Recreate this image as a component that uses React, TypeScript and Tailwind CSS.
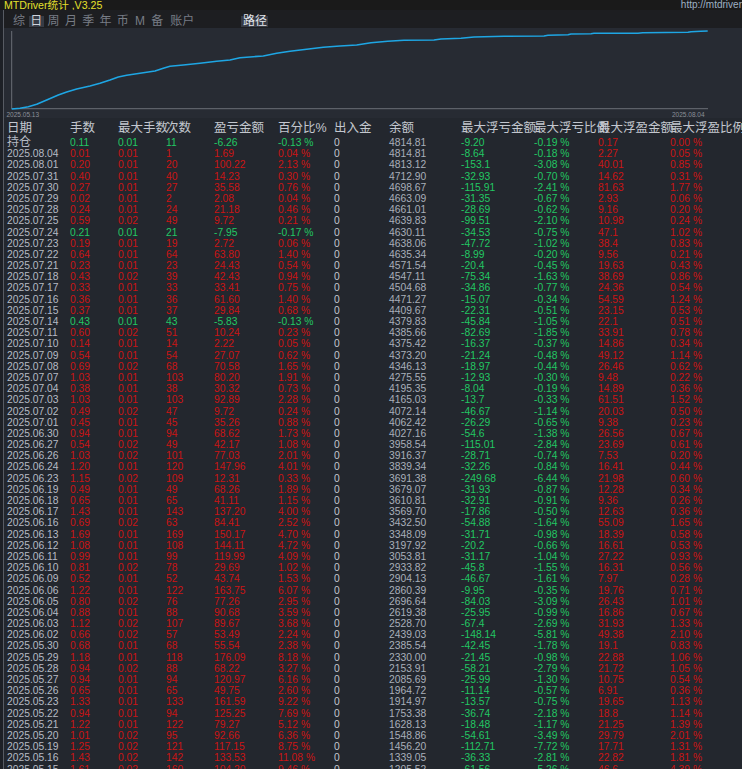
import React from "react";

// date|lots|maxLots|count|pl|pct|balance|maxLoss|maxLossPct|maxGain|maxGainPct
const rows = [
  "持仓|0.11|0.01|11|-6.26|-0.13|4814.81|-9.20|-0.19|0.17|0.00",
  "2025.08.04|0.01|0.01|1|1.69|0.04|4814.81|-8.64|-0.18|2.27|0.05",
  "2025.08.01|0.20|0.01|20|100.22|2.13|4813.12|-153.1|-3.08|40.01|0.85",
  "2025.07.31|0.40|0.01|40|14.23|0.30|4712.90|-32.93|-0.70|14.62|0.31",
  "2025.07.30|0.27|0.01|27|35.58|0.76|4698.67|-115.91|-2.41|81.63|1.77",
  "2025.07.29|0.02|0.01|2|2.08|0.04|4663.09|-31.35|-0.67|2.93|0.06",
  "2025.07.28|0.24|0.01|24|21.18|0.46|4661.01|-28.69|-0.62|9.16|0.20",
  "2025.07.25|0.59|0.02|49|9.72|0.21|4639.83|-99.51|-2.10|10.98|0.24",
  "2025.07.24|0.21|0.01|21|-7.95|-0.17|4630.11|-34.53|-0.75|47.1|1.02",
  "2025.07.23|0.19|0.01|19|2.72|0.06|4638.06|-47.72|-1.02|38.4|0.83",
  "2025.07.22|0.64|0.01|64|63.80|1.40|4635.34|-8.99|-0.20|9.56|0.21",
  "2025.07.21|0.23|0.01|23|24.43|0.54|4571.54|-20.4|-0.45|19.63|0.43",
  "2025.07.18|0.43|0.02|39|42.43|0.94|4547.11|-75.34|-1.63|38.69|0.86",
  "2025.07.17|0.33|0.01|33|33.41|0.75|4504.68|-34.86|-0.77|24.36|0.54",
  "2025.07.16|0.36|0.01|36|61.60|1.40|4471.27|-15.07|-0.34|54.59|1.24",
  "2025.07.15|0.37|0.01|37|29.84|0.68|4409.67|-22.31|-0.51|23.15|0.53",
  "2025.07.14|0.43|0.01|43|-5.83|-0.13|4379.83|-45.84|-1.05|22.1|0.51",
  "2025.07.11|0.60|0.02|51|10.24|0.23|4385.66|-82.69|-1.85|33.91|0.78",
  "2025.07.10|0.14|0.01|14|2.22|0.05|4375.42|-16.37|-0.37|14.86|0.34",
  "2025.07.09|0.54|0.01|54|27.07|0.62|4373.20|-21.24|-0.48|49.12|1.14",
  "2025.07.08|0.69|0.02|68|70.58|1.65|4346.13|-18.97|-0.44|26.46|0.62",
  "2025.07.07|1.03|0.01|103|80.20|1.91|4275.55|-12.93|-0.30|9.48|0.22",
  "2025.07.04|0.38|0.01|38|30.32|0.73|4195.35|-8.04|-0.19|14.89|0.36",
  "2025.07.03|1.03|0.01|103|92.89|2.28|4165.03|-13.7|-0.33|61.51|1.52",
  "2025.07.02|0.49|0.02|47|9.72|0.24|4072.14|-46.67|-1.14|20.03|0.50",
  "2025.07.01|0.45|0.01|45|35.26|0.88|4062.42|-26.29|-0.65|9.38|0.23",
  "2025.06.30|0.94|0.01|94|68.62|1.73|4027.16|-54.6|-1.38|26.56|0.67",
  "2025.06.27|0.54|0.02|49|42.17|1.08|3958.54|-115.01|-2.84|23.69|0.61",
  "2025.06.26|1.03|0.02|101|77.03|2.01|3916.37|-28.71|-0.74|7.53|0.20",
  "2025.06.24|1.20|0.01|120|147.96|4.01|3839.34|-32.26|-0.84|16.41|0.44",
  "2025.06.23|1.15|0.02|109|12.31|0.33|3691.38|-249.68|-6.44|21.98|0.60",
  "2025.06.19|0.49|0.01|49|68.26|1.89|3679.07|-31.93|-0.87|12.28|0.34",
  "2025.06.18|0.65|0.01|65|41.11|1.15|3610.81|-32.91|-0.91|9.36|0.26",
  "2025.06.17|1.43|0.01|143|137.20|4.00|3569.70|-17.86|-0.50|12.63|0.36",
  "2025.06.16|0.69|0.02|63|84.41|2.52|3432.50|-54.88|-1.64|55.09|1.65",
  "2025.06.13|1.69|0.01|169|150.17|4.70|3348.09|-31.71|-0.98|18.39|0.58",
  "2025.06.12|1.08|0.01|108|144.11|4.72|3197.92|-20.2|-0.66|16.61|0.53",
  "2025.06.11|0.99|0.01|99|119.99|4.09|3053.81|-31.17|-1.04|27.22|0.93",
  "2025.06.10|0.81|0.02|78|29.69|1.02|2933.82|-45.8|-1.55|16.31|0.56",
  "2025.06.09|0.52|0.01|52|43.74|1.53|2904.13|-46.67|-1.61|7.97|0.28",
  "2025.06.06|1.22|0.01|122|163.75|6.07|2860.39|-9.95|-0.35|19.76|0.71",
  "2025.06.05|0.80|0.02|76|77.26|2.95|2696.64|-84.03|-3.09|26.43|1.01",
  "2025.06.04|0.88|0.01|88|90.68|3.59|2619.38|-25.95|-0.99|16.86|0.67",
  "2025.06.03|1.12|0.02|107|89.67|3.68|2528.70|-67.4|-2.69|31.93|1.33",
  "2025.06.02|0.66|0.02|57|53.49|2.24|2439.03|-148.14|-5.81|49.38|2.10",
  "2025.05.30|0.68|0.01|68|55.54|2.38|2385.54|-42.45|-1.78|19.1|0.83",
  "2025.05.29|1.18|0.01|118|176.09|8.18|2330.00|-21.45|-0.98|22.88|1.06",
  "2025.05.28|0.94|0.02|88|68.22|3.27|2153.91|-58.21|-2.79|21.72|1.05",
  "2025.05.27|0.94|0.01|94|120.97|6.16|2085.69|-25.99|-1.30|10.75|0.54",
  "2025.05.26|0.65|0.01|65|49.75|2.60|1964.72|-11.14|-0.57|6.91|0.36",
  "2025.05.23|1.33|0.01|133|161.59|9.22|1914.97|-13.57|-0.75|19.65|1.13",
  "2025.05.22|0.94|0.01|94|125.25|7.69|1753.38|-36.74|-2.18|18.8|1.14",
  "2025.05.21|1.22|0.01|122|79.27|5.12|1628.13|-18.48|-1.17|21.25|1.39",
  "2025.05.20|1.01|0.02|95|92.66|6.36|1548.86|-54.61|-3.49|29.79|2.01",
  "2025.05.19|1.25|0.02|121|117.15|8.75|1456.20|-112.71|-7.72|17.71|1.31",
  "2025.05.16|1.43|0.02|142|133.53|11.08|1339.05|-36.33|-2.81|22.82|1.81",
  "2025.05.15|1.61|0.02|160|104.20|9.46|1205.52|-61.56|-5.26|46.6|4.39",
].map((r) => r.split("|"));

const tabs = ["综", "日", "周", "月", "季", "年", "币", "M", "备"];

const curve = [
  [11.7, 109], [20, 108.3], [28.3, 106.7], [36.7, 104.3], [46.7, 100], [58.3, 95],
  [66.7, 92], [76.7, 89], [90, 86], [100, 83.3], [110, 80], [118.3, 77],
  [126.7, 75.3], [140, 73.3], [155, 71], [163.3, 68.3], [170, 66.3], [183.3, 65],
  [200, 63.3], [216.7, 61.3], [230, 60], [240, 57.7], [253.3, 56.7], [263.3, 56],
  [276.7, 53.3], [290, 51.3], [306.7, 49.3], [323.3, 47.3], [340, 46], [356.7, 45],
  [371, 42.7], [387.7, 41.3], [404, 40.3], [434, 40], [441, 39], [461, 38.3],
  [474, 37], [504, 36.3], [544, 36], [548, 35.3], [568, 34.7], [571, 34],
  [591, 33.7], [594, 33.3], [638, 33.3], [642.7, 32.7], [688, 32.3], [691, 31.7],
  [701, 31.3], [707.7, 31],
]
  .map(([x, y]) => `${x},${y}`)
  .join(" ");

const red = "text-[#cc1414]";
const green = "text-[#22c863]";

const Chart = () => (
  <div className="h-[90px] shrink-0 bg-[#272b33]">
    <svg width="738" height="90" viewBox="4 28 738 90">
      <line x1="11.7" y1="31" x2="11.7" y2="108.7" stroke="#6a6e77" strokeWidth="1" />
      <line x1="11.7" y1="108.7" x2="708" y2="108.7" stroke="#6a6e77" strokeWidth="1" />
      <polyline points={curve} fill="none" stroke="#1ea6e4" strokeWidth="1.6" strokeLinejoin="round" />
      <text x="6.5" y="117" fontSize="6.5" fill="#8a8f98" fontFamily="Liberation Sans, sans-serif">
        2025.05.13
      </text>
      <text x="672" y="117" fontSize="6.5" fill="#8a8f98" fontFamily="Liberation Sans, sans-serif">
        2025.08.04
      </text>
    </svg>
  </div>
);

const Header = () => (
  <div className="flex h-[19px] shrink-0 items-end pb-[2px] pl-[3px] text-[12.5px] leading-[13px] text-[#c3c7cf] whitespace-nowrap">
    <div className="w-[63px] shrink-0">日期</div>
    <div className="w-[48px] shrink-0">手数</div>
    <div className="w-[48px] shrink-0">最大手数</div>
    <div className="w-[48px] shrink-0">次数</div>
    <div className="w-[64px] shrink-0">盈亏金额</div>
    <div className="w-[56px] shrink-0">百分比%</div>
    <div className="w-[55px] shrink-0">出入金</div>
    <div className="w-[72px] shrink-0">余额</div>
    <div className="w-[73px] shrink-0">最大浮亏金额</div>
    <div className="w-[64px] shrink-0">最大浮亏比例</div>
    <div className="w-[72px] shrink-0">最大浮盈金额</div>
    <div className="shrink-0">最大浮盈比例</div>
  </div>
);

const Row = ({ r }: { r: string[] }) => {
  const [date, lots, maxLots, count, pl, pct, bal, loss, lossPct, gain, gainPct] = r;
  const c = pl.startsWith("-") ? green : red;
  const isHold = date === "持仓";
  return (
    <div className="flex h-[11.2px] shrink-0 pl-[3px] text-[10.3px] leading-[11.2px] whitespace-nowrap">
      <div className={`w-[63px] shrink-0 text-[#b6bbc5] ${isHold ? "text-[12px] leading-[10px]" : ""}`}>{date}</div>
      <div className={`w-[48px] shrink-0 ${c}`}>{lots}</div>
      <div className={`w-[48px] shrink-0 ${c}`}>{maxLots}</div>
      <div className={`w-[48px] shrink-0 ${c}`}>{count}</div>
      <div className={`w-[64px] shrink-0 ${c}`}>{pl}</div>
      <div className={`w-[56px] shrink-0 ${c}`}>{pct} %</div>
      <div className="w-[55px] shrink-0 text-[#c4c8d0]">0</div>
      <div className="w-[72px] shrink-0 text-[#a9afba]">{bal}</div>
      <div className={`w-[73px] shrink-0 ${green}`}>{loss}</div>
      <div className={`w-[64px] shrink-0 ${green}`}>{lossPct} %</div>
      <div className={`w-[72px] shrink-0 ${red}`}>{gain}</div>
      <div className={`shrink-0 ${red}`}>{gainPct} %</div>
    </div>
  );
};

export default function App() {
  return (
    <div className="w-[742px] h-[769px] overflow-hidden flex flex-col bg-[#23272e] font-['Liberation_Sans','Noto_Sans_CJK_SC',sans-serif]">
      {/* title bar */}
      <div className="flex h-[10px] shrink-0 items-center justify-between bg-[#1a1a1a] pl-[4px]">
        <span className="text-[10.6px] leading-[10px] text-[#e4e02c] whitespace-nowrap">MTDriver统计 ,V3.25</span>
        <span className="whitespace-nowrap text-[10px] leading-[10px] text-[#9fb1c2]">http://mtdriver</span>
      </div>

      <div className="flex flex-1 min-h-0">
        <div className="w-[4px] shrink-0 bg-[#1d2026] border-r border-[#575b63]" />
        <div className="flex flex-1 flex-col min-w-0">
          {/* tabs */}
          <div className="flex h-[18px] shrink-0 items-end pb-[1px] gap-[2.3px] bg-[#1d1e21] pl-[7.5px] text-[12px] leading-[11px] text-[#777c85]">
            {tabs.map((t) => (
              <span
                key={t}
                className={`w-[15px] h-[11px] text-center ${t === "日" ? "bg-[#363b45] text-[#cfd3da]" : ""}`}
              >
                {t}
              </span>
            ))}
            <span className="w-[30px] h-[11px] text-center">账户</span>
            <span className="ml-[42px] w-[27px] h-[11px] bg-[#363b45] text-center text-[#e2e5ea]">路径</span>
          </div>

          <Chart />
          <Header />
          <div className="flex flex-col">
            {rows.map((r) => (
              <Row key={r[0]} r={r} />
            ))}
          </div>
        </div>
      </div>
    </div>
  );
}
